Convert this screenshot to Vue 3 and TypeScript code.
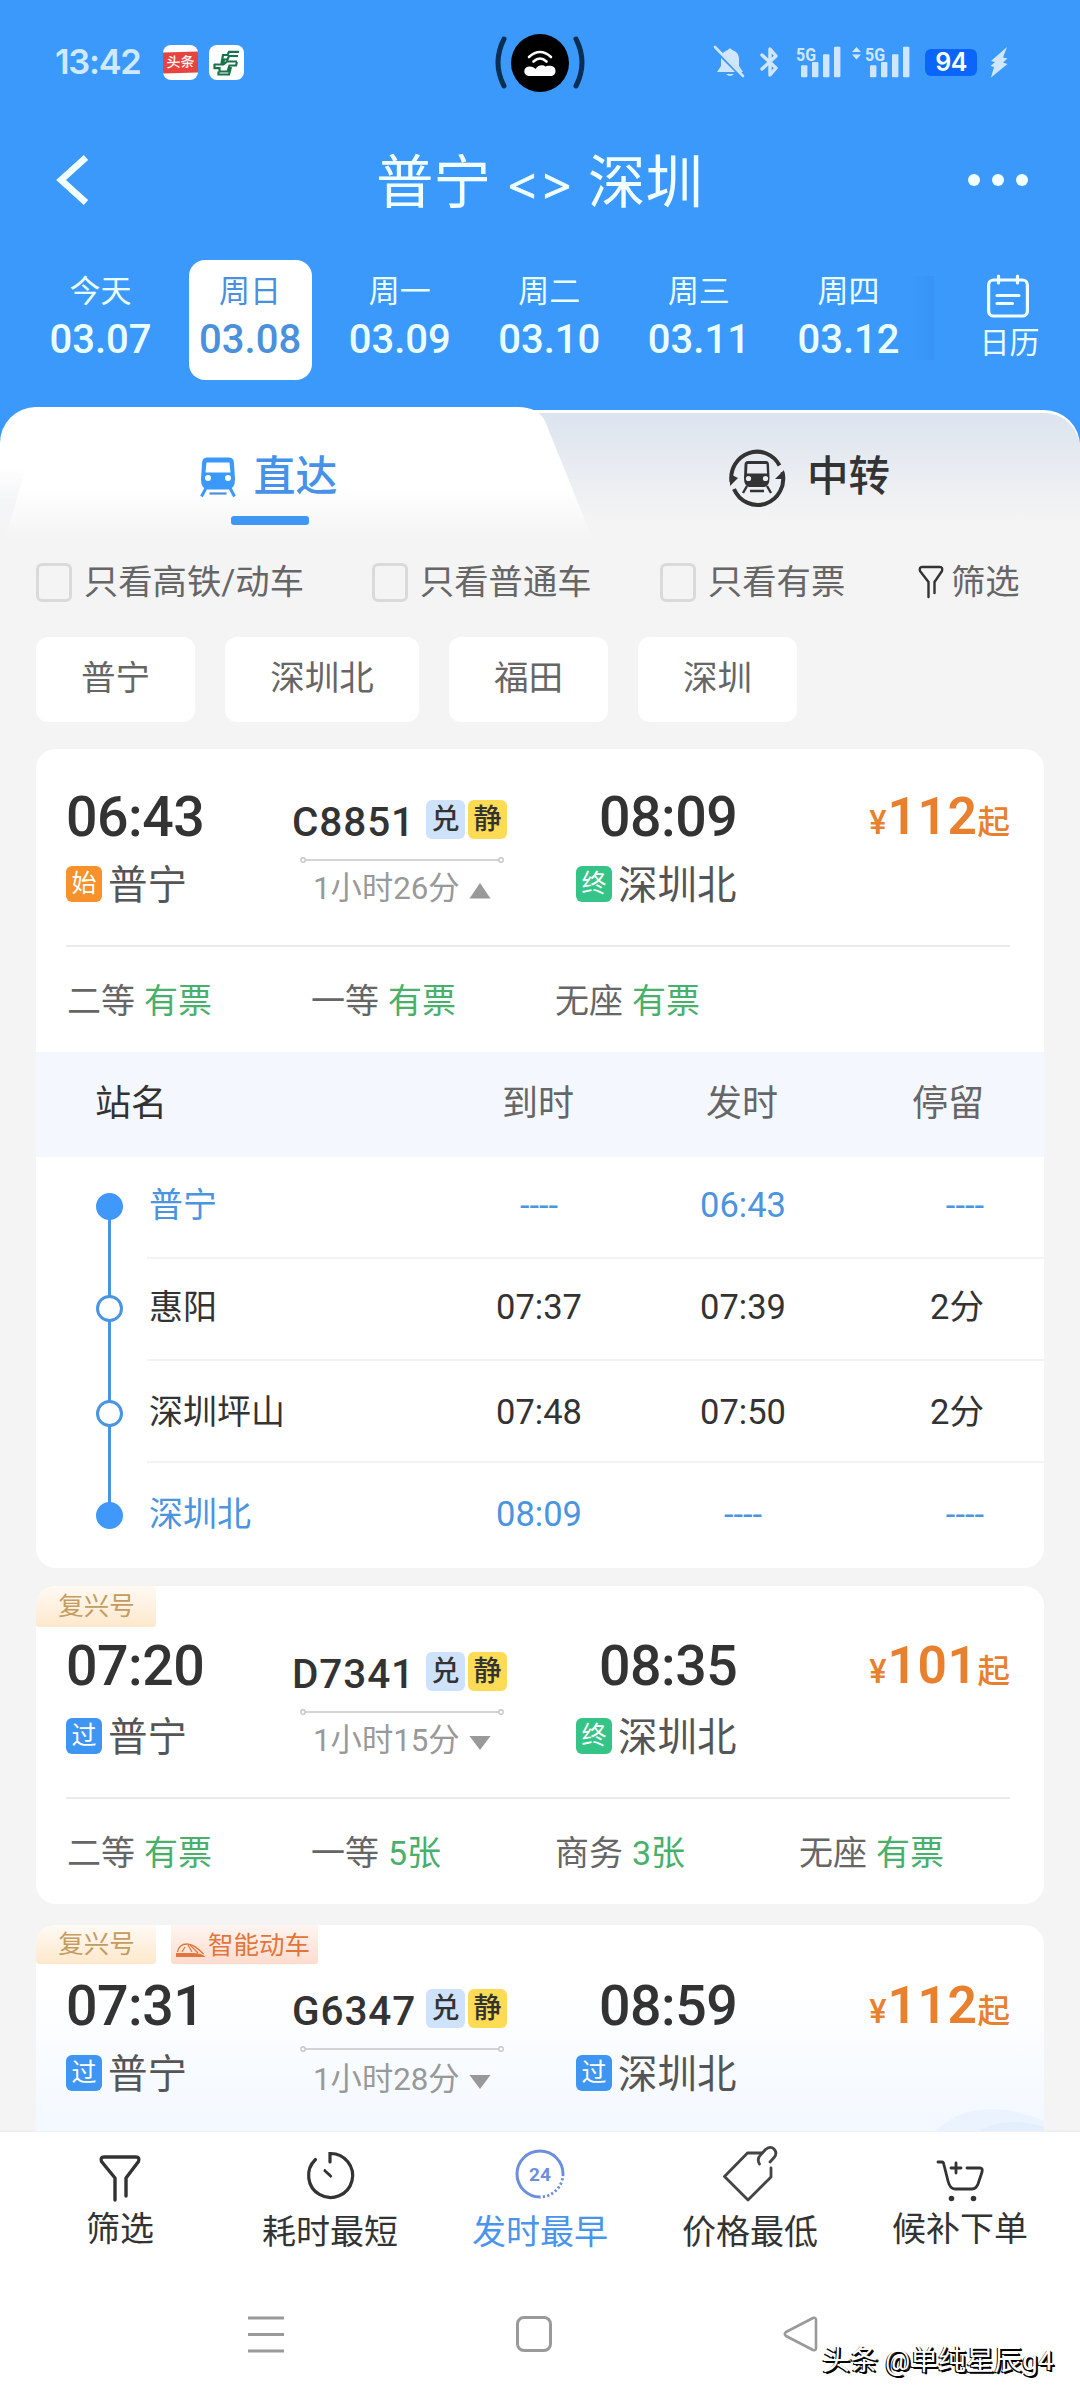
<script setup lang="ts">
interface Day { label: string; date: string; active?: boolean }
interface Seat { name: string; left: string }
interface Stop { name: string; arrive: string; depart: string; stay: string; end: boolean }
interface Train {
  code: string
  depart: string
  arrive: string
  from: string
  to: string
  fromMark: string
  toMark: string
  duration: string
  price: string
  kind: string
  open: boolean
  tags: string[]
  seats: Seat[]
  stops: Stop[]
}

const days: Day[] = [
  { label: '今天', date: '03.07' },
  { label: '周日', date: '03.08', active: true },
  { label: '周一', date: '03.09' },
  { label: '周二', date: '03.10' },
  { label: '周三', date: '03.11' },
  { label: '周四', date: '03.12' },
]

const filters = ['只看高铁/动车', '只看普通车', '只看有票']
const stations = ['普宁', '深圳北', '福田', '深圳']

const markClass: Record<string, string> = { 始: 'origin', 终: 'terminal', 过: 'pass' }

const trains: Train[] = [
  {
    code: 'C8851', depart: '06:43', arrive: '08:09', from: '普宁', to: '深圳北',
    fromMark: '始', toMark: '终', duration: '1小时26分', price: '112', kind: 'first', open: true, tags: [],
    seats: [
      { name: '二等', left: '有票' },
      { name: '一等', left: '有票' },
      { name: '无座', left: '有票' },
    ],
    stops: [
      { name: '普宁', arrive: '----', depart: '06:43', stay: '----', end: true },
      { name: '惠阳', arrive: '07:37', depart: '07:39', stay: '2分', end: false },
      { name: '深圳坪山', arrive: '07:48', depart: '07:50', stay: '2分', end: false },
      { name: '深圳北', arrive: '08:09', depart: '----', stay: '----', end: true },
    ],
  },
  {
    code: 'D7341', depart: '07:20', arrive: '08:35', from: '普宁', to: '深圳北',
    fromMark: '过', toMark: '终', duration: '1小时15分', price: '101', kind: 'second', open: false, tags: ['复兴号'],
    seats: [
      { name: '二等', left: '有票' },
      { name: '一等', left: '5张' },
      { name: '商务', left: '3张' },
      { name: '无座', left: '有票' },
    ],
    stops: [],
  },
  {
    code: 'G6347', depart: '07:31', arrive: '08:59', from: '普宁', to: '深圳北',
    fromMark: '过', toMark: '过', duration: '1小时28分', price: '112', kind: 'third', open: false,
    tags: ['复兴号', '智能动车'], seats: [], stops: [],
  },
]

const bars = [12, 15.3, 23, 30.6]
</script>

<template>
  <div class="screen">
    <header class="top">
      <div class="status">
        <span class="clock">13:42</span>
        <span class="app-icon news"><span>头条</span></span>
        <span class="app-icon">
          <svg width="35" height="35" viewBox="0 0 35 35" fill="none" stroke="#17734a" stroke-width="2.200">
            <path d="M30 6.800H20l-1.500 3.200H14l-1.500 8.500M29 11h-9l-1.500 3.500h-3.500l-1 5M5 19.500h9.500l3.500-3h10M5.500 19v4.200h5v4.300M28 17l-1 3.500h-6.500l-2 6H10.500M22 22l-2 7.500H9.500v-3" />
          </svg>
        </span>
        <svg class="island" width="92" height="60" viewBox="0 0 92 60" fill="none">
          <circle cx="46" cy="31" r="29" fill="#000" />
          <path d="M10 7Q-2 30.500 10 54M82 7q12 23.500 0 47" stroke="#0b2f52" stroke-width="5" stroke-linecap="round" />
          <path d="M35 25q11-10 22 0M39.500 29.500q6.500-6 13 0" stroke="#fff" stroke-width="2.600" stroke-linecap="round" />
          <path d="M35 44c-6 0-6.500-9 0-9.500 3-.3 5 1 6.500 2.500 2-4 7-5 10-2.500 1.500-.8 10-2 10 4.500 0 3-2 5-5 5z" fill="#fff" />
        </svg>
        <div class="signals">
          <svg width="32" height="32" viewBox="0 0 32 32">
            <path d="M3 26h26l-4-6v-7c0-5-3-8-7-9-1-2-3-2-4 0-4 1-7 4-7 9v7zM12 28h8q-4 4-8 0" fill="#cfe6fd" />
            <path d="M-1 1l31 31" stroke="#3b99fc" stroke-width="4" />
            <path d="M1 1l28 29" stroke="#cfe6fd" stroke-width="2.600" stroke-linecap="round" />
          </svg>
          <svg class="bt" width="19" height="32" viewBox="0 0 19 32" fill="none" stroke="#cfe6fd" stroke-width="3.400" stroke-linejoin="round" stroke-linecap="round">
            <path d="M2 9l14 13-6 7V3l6 7L2 23" />
          </svg>
          <svg class="sig one" width="46" height="32" viewBox="0 0 46 32" fill="#cfe6fd">
            <text x="0" y="14.500" class="g5" textLength="20" lengthAdjust="spacingAndGlyphs">5G</text>
            <rect v-for="(h, i) in bars" :key="i" :x="5 + i * 11" :y="31.300 - h" width="6.400" :height="h" rx="1" />
          </svg>
          <svg class="sig two" width="59" height="32" viewBox="0 0 59 32" fill="#cfe6fd">
            <path d="M0 6l4.500-5L9 6zM0 8.500h9l-4.500 5z" />
            <text x="13" y="14.500" class="g5" textLength="20" lengthAdjust="spacingAndGlyphs">5G</text>
            <rect v-for="(h, i) in bars" :key="i" :x="18 + i * 11" :y="31.300 - h" width="6.400" :height="h" rx="1" />
          </svg>
          <span class="battery">94</span>
          <svg class="bolt" width="20" height="32" viewBox="0 0 20 32" fill="#cfe6fd">
            <path d="M18 1L2 15l4 1-4.500 4 3.500 1-3 10.500L18.500 18l-4.500-1.500 4.500-4-4.500-1z" />
          </svg>
        </div>
      </div>

      <div class="title-bar">
        <svg class="back" width="36" height="50" viewBox="0 0 36 50" fill="none" stroke="#f2ffff" stroke-width="6.500">
          <path d="M31 2.500L6 25l25 22.500" />
        </svg>
        <h1>普宁<span class="swap"><i>&lt;</i><i>&gt;</i></span>深圳</h1>
        <div class="more"><i /><i /><i /></div>
      </div>

      <div class="dates">
        <div v-for="d in days" :key="d.date" class="day" :class="{ active: d.active }">
          <span>{{ d.label }}</span>
          <b>{{ d.date }}</b>
        </div>
        <div class="fade" />
        <div class="calendar">
          <svg width="44" height="44" viewBox="0 0 44 44" fill="none" stroke="#f0ffff" stroke-width="3.200" stroke-linecap="round">
            <rect x="2.600" y="6" width="38.800" height="36" rx="5" />
            <path d="M12.500 2v7M31.500 2v7M11 21.500h22M11 29.500h15.500" />
          </svg>
          <span>日历</span>
        </div>
      </div>
    </header>

    <section class="tabs">
      <svg class="tabs-bg" width="1080" height="133" viewBox="0 0 1080 133">
        <defs>
          <linearGradient id="grey" x1="0" y1="0" x2="0" y2="1">
            <stop offset="0" stop-color="#dce4ef" />
            <stop offset=".85" stop-color="#f4f4f4" />
            <stop offset="1" stop-color="#f4f4f4" />
          </linearGradient>
          <linearGradient id="white" x1="0" y1="0" x2="0" y2="1">
            <stop offset="0" stop-color="#fff" />
            <stop offset=".6" stop-color="#fff" />
            <stop offset="1" stop-color="#f4f4f4" />
          </linearGradient>
          <linearGradient id="edge" x1="0" y1="0" x2="0" y2="1">
            <stop offset="0" stop-color="#fff" />
            <stop offset=".45" stop-color="#fff" />
            <stop offset=".7" stop-color="#f4f5f7" />
            <stop offset="1" stop-color="#f4f4f4" />
          </linearGradient>
        </defs>
        <path d="M400 3h644a36 36 0 0 1 36 36v94H400z" fill="#fff" />
        <path d="M400 6h642a36 36 0 0 1 38 38v89H400z" fill="url(#grey)" />
        <path d="M0 133V36A36 36 0 0 1 36 0h200v133z" fill="url(#edge)" />
        <path d="M6 128L34 36V0h484q20 0 27 14l48 119H6z" fill="url(#white)" />
      </svg>
      <div class="tab direct">
        <div class="tab-line">
          <svg width="36" height="40" viewBox="0 0 36 40">
            <path d="M7 .500h22q5 0 5 6l1 16q0 9-7 10H8q-7-1-7-10l1-16q0-6 5-6z" fill="#3b99fc" />
            <path d="M6.500 5.500h23l1 10h-25z" fill="#fff" />
            <circle cx="8" cy="21" r="3" fill="#fff" /><circle cx="28" cy="21" r="3" fill="#fff" />
            <path d="M6 31l-4.500 8.500M30 31l4.500 8.500" stroke="#3b99fc" stroke-width="3" />
            <path d="M9.500 36.500h17" stroke="#4a90dc" stroke-width="2.200" />
          </svg>
          <span>直达</span>
        </div>
        <i class="underline" />
      </div>
      <div class="tab transfer">
        <svg width="56" height="58" viewBox="0 0 56 58">
          <g fill="none" stroke="#333" stroke-width="4">
            <path d="M2.500 34A25.700 26.500 0 0 1 50.500 17.500" />
            <path d="M53.500 24A25.700 26.500 0 0 1 5 41" />
          </g>
          <path d="M1 26v12l8-8zM55 22v9h-9z" fill="#333" />
          <path d="M19 13h18q3 0 3 4l.500 13q0 8-5 9H20q-5-1-5-9l.500-13q0-4 3.500-4z" fill="#333" />
          <path d="M18.500 16h19l.5 9.500H18z" fill="#e9ecf0" />
          <circle cx="19.500" cy="30.500" r="2.600" fill="#eee" /><circle cx="36.500" cy="30.500" r="2.600" fill="#eee" />
          <path d="M18 38l-4 7M38 38l4 7M21 43h14" stroke="#333" stroke-width="2.400" />
        </svg>
        <span>中转</span>
      </div>
    </section>

    <section class="filters">
      <label v-for="(f, i) in filters" :key="f" :class="'f' + i"><i class="box" />{{ f }}</label>
      <div class="sift">
        <svg width="26" height="34" viewBox="0 0 26 34" fill="none" stroke="#333" stroke-width="2.400" stroke-linecap="round" stroke-linejoin="round">
          <path d="M10.500 32V17L2 6q-1-4 2-4h18q3 0 2 4l-7.500 11v11" />
        </svg>
        <span>筛选</span>
      </div>
    </section>

    <section class="chips">
      <span v-for="s in stations" :key="s" class="chip">{{ s }}</span>
    </section>

    <main class="list">
      <article v-for="t in trains" :key="t.code" class="card" :class="t.kind">
        <svg v-if="t.kind === 'third'" class="swoosh" width="120" height="50" viewBox="0 0 120 50">
          <path d="M0 50C10 12 60-8 120 18V50z" fill="#eaf3ff" />
          <path d="M34 50C50 22 80 12 120 24V50z" fill="#e3effd" />
        </svg>
        <div v-if="t.tags.length" class="tags">
          <span class="tag gold">{{ t.tags[0] }}</span>
          <span v-if="t.tags[1]" class="tag red">
            <svg width="30" height="16" viewBox="0 0 30 16">
              <path d="M1.500 10Q3 2 11 2q7 0 16.500 10" fill="none" stroke="#e2763a" stroke-width="1.300" />
              <path d="M0 11h17q9 0 12.500 4H0z" fill="#e2763a" />
              <path d="M6 10l3-5M12 3l4 7M14 3l8 8" stroke="#e2763a" stroke-width="1.200" />
            </svg>{{ t.tags[1] }}
          </span>
        </div>
        <div class="head">
          <div class="end-col">
            <b class="time">{{ t.depart }}</b>
            <div class="place"><i class="mark" :class="markClass[t.fromMark]">{{ t.fromMark }}</i><span>{{ t.from }}</span></div>
          </div>
          <div class="mid-col">
            <div class="code">
              <b>{{ t.code }}</b>
              <i class="badge blue">兑</i>
              <i class="badge yellow">静</i>
            </div>
            <svg class="line" width="204" height="8" viewBox="0 0 204 8" fill="#fff" stroke="#c6c6c6" stroke-width="1.400">
              <path d="M5 4h194" /><circle cx="3" cy="4" r="2.200" /><circle cx="201" cy="4" r="2.200" />
            </svg>
            <div class="duration">
              {{ t.duration }}
              <svg width="22" height="16" viewBox="0 0 22 16" fill="#999">
                <path v-if="t.open" d="M11 0l10.500 15.500H.500z" />
                <path v-else d="M.500 1h21L11 15z" />
              </svg>
            </div>
          </div>
          <div class="end-col to">
            <b class="time">{{ t.arrive }}</b>
            <div class="place"><i class="mark" :class="markClass[t.toMark]">{{ t.toMark }}</i><span>{{ t.to }}</span></div>
          </div>
          <div class="price"><small class="yen">¥</small><b>{{ t.price }}</b><small>起</small></div>
        </div>
        <div v-if="t.seats.length" class="seats">
          <span v-for="s in t.seats" :key="s.name">{{ s.name }}<em>{{ s.left }}</em></span>
        </div>
        <div v-if="t.stops.length" class="route">
          <div class="row header">
            <span class="name">站名</span><span class="cell">到时</span><span class="cell">发时</span><span class="stay">停留</span>
          </div>
          <div v-for="(s, i) in t.stops" :key="s.name" class="row stop" :class="{ end: s.end, ['s' + i]: true }">
            <div class="rail"><i class="dot" /></div>
            <div class="body">
              <span class="name">{{ s.name }}</span><span class="cell">{{ s.arrive }}</span><span class="cell">{{ s.depart }}</span><span class="stay">{{ s.stay }}</span>
            </div>
          </div>
        </div>
      </article>
    </main>

    <footer class="sort">
      <div class="item">
        <svg width="44" height="48" viewBox="0 0 44 48" fill="none" stroke="#333" stroke-width="3.400" stroke-linecap="round" stroke-linejoin="round">
          <path d="M17 45V23L3.500 6.500Q2 2 6 2h32q4 0 2.500 4.500L28 23v18" />
        </svg>
        <span>筛选</span>
      </div>
      <div class="item low">
        <svg width="48" height="48" viewBox="0 0 48 48" fill="none" stroke="#333" stroke-width="3.200" stroke-linecap="round">
          <path d="M24 11V2.500A22 22 0 1 1 9.500 8.500" />
          <path d="M18 19l7.500 7-2-2.500z" stroke-width="2.400" />
        </svg>
        <span>耗时最短</span>
      </div>
      <div class="item low on">
        <svg width="50" height="50" viewBox="0 0 50 50" fill="none">
          <path d="M25 48A23 23 0 1 1 48 25" stroke="#6b8fdc" stroke-width="3" />
          <path d="M48 25A23 23 0 0 1 25 48" stroke="#6b8fdc" stroke-width="2.800" stroke-dasharray="2.200 2.200" />
          <text x="25" y="31.800" text-anchor="middle" class="t24">24</text>
        </svg>
        <span>发时最早</span>
      </div>
      <div class="item low">
        <svg class="price-tag" width="56" height="56" viewBox="0 0 56 56" fill="none" stroke="#444" stroke-width="2.800" stroke-linecap="round" stroke-linejoin="round">
          <path d="M40 7H25.500L2.500 30.500 26 54 49 31V22" />
          <path d="M37.500 18q-3-5 1-9l5-5.500q5-4 8.500-.5 3.500 4 .5 8l-4.500 5" />
        </svg>
        <span>价格最低</span>
      </div>
      <div class="item">
        <svg width="48" height="44" viewBox="0 0 48 44" fill="none" stroke="#333" stroke-width="2.800" stroke-linecap="round" stroke-linejoin="round">
          <path d="M2 3h4q1.500 0 2 3l4 16q2 8 7 8h17q4 0 6-5l4-12q1-4-2-4H31" />
          <path d="M20 4v10M15 9h10" />
          <circle cx="15.500" cy="39.500" r="1.800" fill="#333" stroke-width="2" /><circle cx="37.500" cy="39.500" r="1.800" fill="#333" stroke-width="2" />
        </svg>
        <span>候补下单</span>
      </div>
    </footer>

    <nav class="system">
      <svg class="menu" width="36" height="37" viewBox="0 0 36 37" stroke="#9a9a9a" stroke-width="3">
        <path d="M0 2h36M0 18.500h36M0 35h36" />
      </svg>
      <i class="home" />
      <svg class="prev" width="35" height="36" viewBox="0 0 35 36" fill="none" stroke="#9a9a9a" stroke-width="2.600" stroke-linejoin="round">
        <path d="M3 16L30 2q3-1 3 2v28q0 3-3 2L3 20q-2.500-2 0-4z" />
      </svg>
      <span class="credit">头条 @单纯星辰g4</span>
    </nav>
  </div>
</template>

<style>
body { margin: 0; background: #f4f4f4; }
</style>

<style scoped>
.screen {
  width: 1080px; height: 2400px; overflow: hidden; background: #f4f4f4; display: flex; flex-direction: column;
  font-family: Roboto, "Noto Sans CJK SC", sans-serif; color: #333; box-sizing: border-box;
}
.screen * { box-sizing: border-box; }
svg { display: block; flex: none; overflow: visible; }
i, em { font-style: normal; }

.top { height: 407px; background: #3b99fc; flex: none; }
.status { height: 124px; display: flex; align-items: center; padding-left: 55px; }
.clock { width: 108px; font: 600 34.500px/40px Inter, sans-serif; color: #cfe9fd; letter-spacing: -1.300px; }
.app-icon { width: 35px; height: 35px; border-radius: 8px; background: #fff; margin-right: 11px; display: flex; align-items: center; overflow: hidden; }
.news span { width: 35px; height: 21px; background: #e8443f; color: #fff; font-size: 14px; line-height: 21px; font-weight: 500; text-align: center; transform: skewY(-2deg); }
.island { margin-left: 239px; }
.signals { margin-left: 128px; display: flex; align-items: center; }
.bt { margin-left: 14px; }
.sig.one { margin-left: 17px; }
.sig.two { margin-left: 10px; }
.g5 { font: 700 18px Roboto, sans-serif; }
.battery { margin-left: 14px; width: 52px; height: 27px; border-radius: 6px; background: #0a66fb; color: #fff; font: 600 25px/27px Inter, sans-serif; text-align: center; letter-spacing: -.5px; }
.bolt { margin-left: 12px; }

.title-bar { height: 112px; display: flex; align-items: center; padding: 0 52px 0 55px; justify-content: space-between; }
h1 { margin: 10px 0 0 20px; font-weight: 400; font-size: 57.500px; line-height: 80px; color: #f2ffff; display: flex; }
.swap { display: flex; justify-content: center; gap: 8px; width: 97px; font-family: "Noto Sans", sans-serif; font-size: 50px; line-height: 82px; -webkit-text-stroke: .6px #f2ffff; }
.swap i { width: 27px; display: flex; justify-content: center; }
.more { display: flex; gap: 12px; }
.more i { width: 12px; height: 12px; border-radius: 50%; background: #f2ffff; }

.dates { margin-top: 24px; height: 120px; padding-left: 39px; display: flex; }
.day { width: 123px; margin-right: 26.600px; height: 120px; border-radius: 16px; text-align: center; color: #eaffff; flex: none; padding-top: 11px; }
.day span { display: block; font-size: 31px; line-height: 42px; }
.day b { display: block; font-weight: 500; font-size: 40px; line-height: 54px; }
.day.active { background: #fff; color: #4a90dc; }
.fade { width: 24px; height: 84px; margin: 16px 0 0 -27px; background: linear-gradient(90deg, rgba(44, 134, 228, 0), rgba(44, 134, 228, .28)); }
.calendar { margin-left: 43px; padding-top: 14px; display: flex; flex-direction: column; align-items: center; color: #eaffff; }
.calendar span { font-size: 30px; line-height: 40px; margin: 5px 0 0 3px; }

.tabs { height: 133px; position: relative; flex: none; display: flex; background: linear-gradient(#3b99fc 60px, #f4f4f4 60px); }
.tabs-bg { position: absolute; inset: 0; }
.tab { position: relative; display: flex; }
.direct { width: 540px; flex-direction: column; align-items: center; padding-top: 38px; }
.tab-line { display: flex; align-items: center; gap: 17px; height: 64px; color: #4692ea; font-size: 42px; font-weight: 500; line-height: 60px; margin-right: 2px; }
.underline { width: 78px; height: 9px; border-radius: 3px; background: #3f97f3; margin-top: 7px; }
.transfer { padding: 37px 0 0 189px; height: 103px; align-items: center; gap: 22px; font-size: 41.500px; font-weight: 500; line-height: 60px; }

.filters { height: 97px; flex: none; display: flex; align-items: center; padding: 0 0 13px 36px; font-size: 34.300px; color: #666; line-height: 40px; }
.filters label { display: flex; align-items: center; }
.box { width: 36px; height: 39px; border: 3px solid #dadada; border-radius: 6px; margin-right: 12px; }
.f0 { width: 336px; }
.f1 { width: 288px; }
.f2 { width: 258px; }
.sift { display: flex; align-items: center; gap: 7px; }

.chips { display: flex; gap: 30px; padding-left: 36px; flex: none; }
.chip { height: 85px; padding: 0 45px; border-radius: 12px; background: #fff; color: #666; font-size: 34.600px; line-height: 82px; }

.list { height: 1409px; padding: 27px 36px 0; flex: none; overflow: hidden; display: flex; flex-direction: column; }
.card { background: #fff; border-radius: 20px; position: relative; flex: none; overflow: hidden; }
.first { height: 819px; padding-top: 37px; margin-bottom: 18px; }
.second { height: 318px; margin-bottom: 21px; }
.third { height: 330px; background: linear-gradient(#fff 60px, #f2f8ff 210px); }
.swoosh { position: absolute; right: 0; top: 178px; }
.tags { display: flex; height: 42px; gap: 15px; position: relative; }
.tag { height: 41px; font-size: 25.500px; line-height: 46px; border-radius: 0 0 3px 3px; display: flex; }
.third .tag { height: 39px; line-height: 38px; }
.gold { width: 120px; justify-content: center; padding-left: 1px; color: #c49b60; background: linear-gradient(#fffaf4, #fde8cc); line-height: 40px; }
.red { width: 147px; padding-left: 5px; color: #e2763a; background: linear-gradient(#fff5f1, #fddccd); align-items: center; gap: 2px; }
.red svg { margin-top: 11px; }

.head { display: flex; padding: 0 34px 0 30px; position: relative; }
.second .head { padding-top: 7px; }
.third .head { padding-top: 8px; }
.end-col { width: 226px; }
.time { display: block; font-size: 55.500px; font-weight: 500; line-height: 63px; height: 60px; letter-spacing: -.5px; }
.place { margin-top: 20px; height: 36px; display: flex; align-items: center; font-size: 39.500px; line-height: 36px; color: #555; gap: 6px; white-space: nowrap; }
.place span { padding-top: 4px; }
.second .place { margin-top: 23px; }
.second .mid-col { padding-top: 3px; }
.mark { width: 36px; height: 36px; border-radius: 6px; color: #fff; font-size: 25px; line-height: 36px; text-align: center; }
.mark.origin { background: #f6912b; }
.mark.terminal { background: #35c487; }
.mark.pass { background: #3f95f2; }
.mid-col { width: 284px; }
.code { display: flex; height: 39px; margin-top: 14px; width: 215px; }
.code b { font-size: 40.500px; font-weight: 500; line-height: 45px; flex: 1; letter-spacing: .9px; }
.badge { width: 39px; height: 39px; border-radius: 6px; margin-left: 3px; font-size: 28px; font-weight: 500; line-height: 39px; text-align: center; }
.badge.blue { background: #cfe2fc; }
.badge.yellow { background: #fddb55; }
.line { margin: 17px 0 0 8px; }
.duration { display: flex; align-items: center; gap: 9px; margin: 8px 0 0 21px; font-size: 31.300px; line-height: 34px; color: #999; white-space: nowrap; }
.third .duration { margin-top: 10px; }
.duration svg { margin-top: 3px; }
.to { width: 180px; }
.to .time { padding-left: 23px; }
.price { flex: 1; display: flex; justify-content: flex-end; align-items: baseline; color: #e8802e; height: 60px; white-space: nowrap; }
.price b { font-size: 51.500px; font-weight: 600; line-height: 62px; letter-spacing: .6px; }
.price small { font-size: 32.500px; font-weight: 500; }
.price .yen { margin-right: 1px; }

.seats { margin: 39px 34px 0 30px; border-top: 2px solid #ebebeb; height: 107px; display: flex; align-items: center; font-size: 34px; line-height: 40px; color: #666; padding-top: 3px; }
.seats span { width: 244px; padding-left: 1px; flex: none; }
.seats em { color: #48b06a; margin-left: 9px; }

.row { display: flex; font-size: 34px; line-height: 40px; }
.header { height: 105px; background: #f4f8fe; align-items: center; font-size: 36px; color: #666; padding: 0 0 2px 59px; }
.header .name { width: 341px; color: #333; }
.cell { width: 204px; text-align: center; flex: none; }
.stay { flex: 1; text-align: right; padding-right: 60px; }
.stop { height: 102px; }
.s3 { height: 106px; }
.rail { width: 111px; display: flex; justify-content: center; padding: 36px 0 0 36px; background: linear-gradient(#4a94e4, #4a94e4) 72px 0 / 3px 100% no-repeat; }
.s0 .rail { background-size: 3px 60px; background-position: 72px 50px; }
.s3 .rail { background-size: 3px 50px; padding-top: 39px; }
.dot { width: 27px; height: 27px; border: 3px solid #4a94e4; border-radius: 50%; background: #fff; }
.end .dot { background: #3f98fa; border-color: #3f98fa; }
.s2 .rail { padding-top: 39px; }
.body { flex: 1; display: flex; padding: 28px 0 0 2px; border-bottom: 2px solid #f3f3f3; }
.body .name { width: 288px; }
.body .cell, .body .stay { font-size: 34.500px; }
.s2 .body { padding-top: 31px; }
.s3 .body { border: 0; padding-top: 31px; }
.end { color: #4a94e0; }

.sort { height: 137px; flex: none; background: #fff; border-top: 2px solid #f0f0f0; display: flex; padding: 0 15px; margin-top: -1px; }
.item { width: 210px; display: flex; flex-direction: column; align-items: center; justify-content: flex-end; padding-bottom: 18px; font-size: 34px; }
.item span { line-height: 40px; margin-top: 6px; }
.item.low { padding-bottom: 15px; }
.item.low span { margin-top: 13px; }
.item .price-tag { margin-bottom: -3px; }
.on { color: #4a94ec; }
.t24 { font: 700 19px Roboto, sans-serif; fill: #6b8fdc; }

.system { flex: 1; background: #fff; display: flex; padding: 49px 0 0 248px; }
.home { width: 36px; height: 36px; border: 3px solid #9a9a9a; border-radius: 8px; margin-left: 232px; }
.prev { margin-left: 231px; }
.credit { margin: 29px 0 0 4px; font-size: 28px; line-height: 32px; color: #fff; white-space: nowrap; text-shadow: -1px 1px 0 #000, 1px 1px 1px #000, 2px 2px 0 #000; }
</style>
